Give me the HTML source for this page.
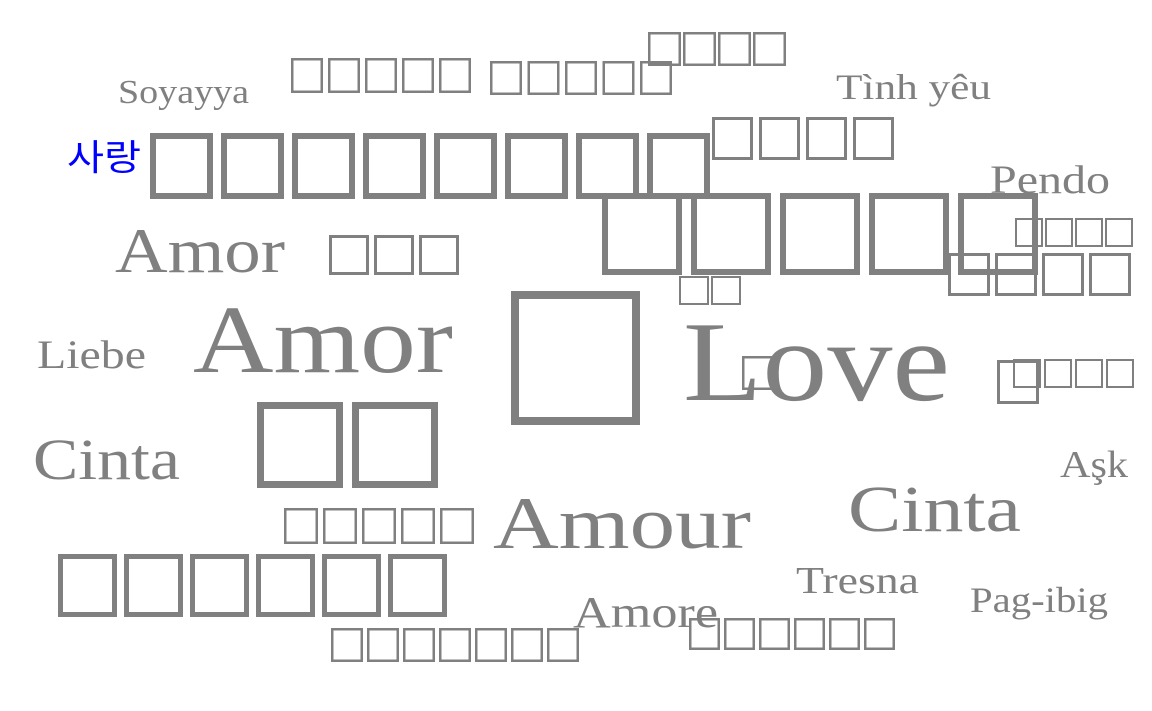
<!DOCTYPE html>
<html><head><meta charset="utf-8"><style>
html,body{margin:0;padding:0;background:#fff;width:1152px;height:711px;overflow:hidden}
svg{display:block}
text{font-family:"Liberation Serif","DejaVu Serif",serif;fill:#808080}
</style></head><body>
<svg id="s" width="1152" height="711" viewBox="0 0 1152 711" xmlns="http://www.w3.org/2000/svg">
<g id="b" fill="none" stroke="#808080"></g>
<text x="118" y="103" font-size="34" textLength="131" lengthAdjust="spacingAndGlyphs">Soyayya</text>
<text x="836" y="99" font-size="36" textLength="155" lengthAdjust="spacingAndGlyphs">Tình yêu</text>
<text x="67" y="170" font-size="36" style="fill:#0000ff;font-family:'Liberation Sans','Noto Sans CJK KR',sans-serif" textLength="74" lengthAdjust="spacingAndGlyphs">사랑</text>
<text x="990" y="193" font-size="40" textLength="120" lengthAdjust="spacingAndGlyphs">Pendo</text>
<text x="115" y="272" font-size="64" textLength="170" lengthAdjust="spacingAndGlyphs">Amor</text>
<text x="193" y="372" font-size="96" textLength="260" lengthAdjust="spacingAndGlyphs">Amor</text>
<text x="683" y="400" font-size="114" textLength="267" lengthAdjust="spacingAndGlyphs">Love</text>
<text x="37" y="368" font-size="40" textLength="109" lengthAdjust="spacingAndGlyphs">Liebe</text>
<text x="33" y="479" font-size="58" textLength="147" lengthAdjust="spacingAndGlyphs">Cinta</text>
<text x="1060" y="477" font-size="38" textLength="68" lengthAdjust="spacingAndGlyphs">Aşk</text>
<text x="493" y="548" font-size="74" textLength="258" lengthAdjust="spacingAndGlyphs">Amour</text>
<text x="848" y="531" font-size="66" textLength="173" lengthAdjust="spacingAndGlyphs">Cinta</text>
<text x="796" y="593" font-size="38" textLength="123" lengthAdjust="spacingAndGlyphs">Tresna</text>
<text x="970" y="612" font-size="36" textLength="138" lengthAdjust="spacingAndGlyphs">Pag-ibig</text>
<text x="573" y="627" font-size="44" textLength="145" lengthAdjust="spacingAndGlyphs">Amore</text>
</svg>
<script>
var g=document.getElementById('b');
function row(x0,y0,p,w,h,n,sw){for(var i=0;i<n;i++){var r=document.createElementNS('http://www.w3.org/2000/svg','rect');r.setAttribute('x',x0+i*p+sw/2);r.setAttribute('y',y0+sw/2);r.setAttribute('width',w-sw);r.setAttribute('height',h-sw);r.setAttribute('stroke-width',sw);g.appendChild(r);}}
row(648,32,35,33,34,4,2.5);
row(291,58,37,32,35,5,2.5);
row(490,61,37.5,32,34,5,2.5);
row(150,133,71,63,66,8,6);
row(712,117,47,41,43,4,3);
row(602,193,89,80,82,5,6);
row(1015,218,30,28,29,4,2);
row(948,253,47,42,43,4,3);
row(329,235,45,40,40,3,3);
row(679,276,32,30,29,2,2);
row(511,291,129,129,134,1,8);
row(257,402,95,86,86,2,7);
row(742,356,33,33,34,1,2.5);
row(997,360,42,42,44,1,3);
row(1013,359,31,28,29,4,2);
row(284,508,39,34,36,5,2.5);
row(58,554,66,59,63,6,5);
row(331,628,36,32,34,7,2.5);
row(689,618,35,31,32,6,2.5);
</script>
</body></html>
